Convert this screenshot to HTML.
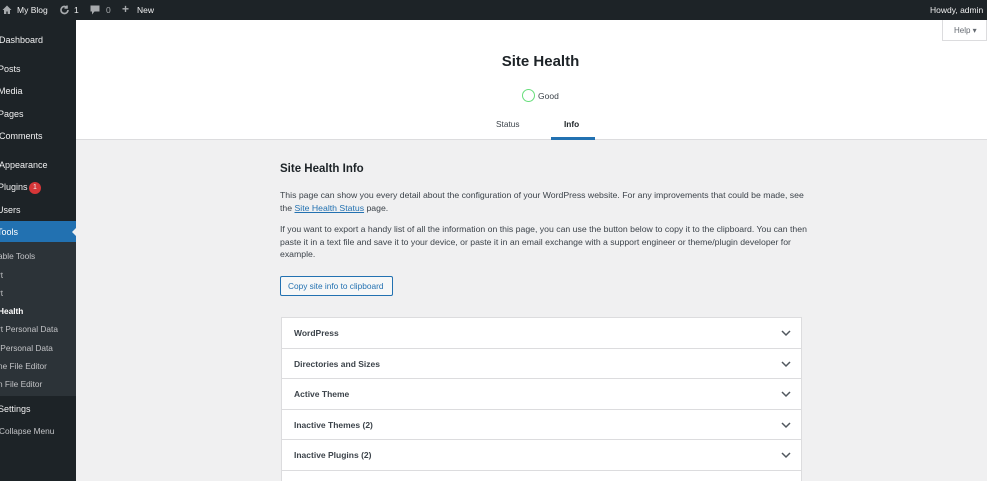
<!DOCTYPE html>
<html style="overflow:hidden;width:987px;height:481px"><head><style>
*{margin:0;padding:0;box-sizing:border-box}
body{width:987px;height:481px;overflow:hidden;background:#f0f0f1;font-family:"Liberation Sans",sans-serif;position:relative;color:#1d2327}
.bar{position:absolute;left:0;top:0;width:987px;height:20px;background:#1d2327;color:#f0f0f1;font-size:8.5px}
.bar span{position:absolute;top:5px}
.side{position:absolute;left:0;top:20px;width:76px;height:461px;background:#1d2327;color:#f0f0f1;font-size:9px;overflow:hidden}
.side div{position:absolute;white-space:nowrap}
.sub{position:absolute;left:0;top:222px;width:76px;height:154px;background:#2c3338}
.side .sub div{color:#c3c4c7;font-size:8.3px}
.hdr{position:absolute;left:76px;top:20px;width:911px;height:120px;background:#fff;border-bottom:1px solid #dcdcde}
.abs{position:absolute}
p{position:absolute;left:280px;font-size:8.7px;line-height:12.5px;color:#3c434a;width:525px}
.acc{position:absolute;left:281px;width:521px;height:170px;overflow:hidden;background:#fff;border:1px solid #dcdcde}
.row{height:30.5px;border-bottom:1px solid #dcdcde;position:relative;font-size:8.5px;font-weight:bold;color:#3c434a;padding:10px 0 0 12px}
.row svg{position:absolute;right:10px;top:12px}
</style></head><body>
<div class="bar">
<svg class="abs" style="left:2px;top:5px" width="10" height="10" viewBox="0 0 10 10"><path d="M5 0.5L0.5 5h1.5v4h2.3V6.5h1.4V9h2.3V5h1.5z" fill="#a7aaad"/></svg>
<span style="left:17px">My Blog</span>
<svg class="abs" style="left:59px;top:5px" width="11" height="10" viewBox="0 0 11 10"><path d="M9 5a3.5 3.5 0 1 1-1-2.5M8 0.5v2.5h-2.5M2 5a3.5 3.5 0 0 0 6 2.5" stroke="#a7aaad" stroke-width="1.6" fill="none"/></svg>
<span style="left:74px">1</span>
<svg class="abs" style="left:90px;top:5px" width="10" height="10" viewBox="0 0 10 10"><path d="M0.5 0.5h9v6h-5l-2.5 3v-3h-1.5z" fill="#a7aaad"/></svg>
<span style="left:106px;color:#a7aaad">0</span>
<span style="left:122px;font-size:12px;top:2px;font-weight:bold;color:#a7aaad">+</span>
<span style="left:137px">New</span>
<span style="left:930px">Howdy, admin</span>
</div>
<div class="side">
<div style="left:-1px;top:15px">Dashboard</div>
<div style="left:-2px;top:44px">Posts</div>
<div style="left:-2px;top:66px">Media</div>
<div style="left:-2px;top:89px">Pages</div>
<div style="left:-1px;top:111px">Comments</div>
<div style="left:-1px;top:140px">Appearance</div>
<div style="left:-2px;top:162px">Plugins</div>
<div style="left:29px;top:162px;width:12px;height:12px;border-radius:6px;background:#d63638;font-size:7px;text-align:center;line-height:12px">1</div>
<div style="left:-3px;top:185px">Users</div>
<div style="left:0;top:201px;width:76px;height:21px;background:#2271b1"></div>
<div style="left:-3px;top:207px;color:#fff">Tools</div>
<div style="left:72px;top:207px;width:0;height:0;border:5px solid transparent;border-right-color:#f0f0f1;border-left:none"></div>
<div class="sub">
<div style="left:-2px;top:9px">able Tools</div>
<div style="left:-2px;top:28px">rt</div>
<div style="left:-2px;top:46px">rt</div>
<div style="left:-2px;top:64px;color:#fff;font-weight:bold">Health</div>
<div style="left:-2px;top:82px">rt Personal Data</div>
<div style="left:-2px;top:101px">&nbsp;Personal Data</div>
<div style="left:-2px;top:119px">ne File Editor</div>
<div style="left:-2px;top:137px">n File Editor</div>
</div>
<div style="left:-2px;top:384px">Settings</div>
<div style="left:-1px;top:406px;color:#c3c4c7;font-size:8.3px">Collapse Menu</div>
</div>
<div class="hdr">
<div class="abs" style="left:0;width:929px;top:33px;text-align:center;font-size:15px;font-weight:bold">Site Health</div>
<div class="abs" style="left:446px;top:69px;width:13px;height:13px;border:1.5px solid #68de7c;border-radius:50%"></div>
<div class="abs" style="left:462px;top:71px;font-size:8.5px;color:#3c434a">Good</div>
<div class="abs" style="left:420px;top:99px;font-size:8.3px;color:#3c434a">Status</div>
<div class="abs" style="left:488px;top:99px;font-size:8.3px;font-weight:bold;color:#1d2327">Info</div>
<div class="abs" style="left:475px;top:117px;width:44px;height:3px;background:#2271b1"></div>
<div class="abs" style="left:866px;top:0;width:45px;height:21px;border:1px solid #dcdcde;border-top:none;font-size:8px;color:#646970;padding:6px 0 0 11px">Help ▾</div>
</div>
<div class="abs" style="left:280px;top:163px;font-size:11.5px;font-weight:bold">Site Health Info</div>
<p style="top:189px;width:525px">This page can show you every detail about the configuration of your WordPress website. For any improvements that could be made, see the <span style="color:#2271b1;text-decoration:underline">Site Health Status</span> page.</p>
<p style="top:223px;width:535px">If you want to export a handy list of all the information on this page, you can use the button below to copy it to the clipboard. You can then paste it in a text file and save it to your device, or paste it in an email exchange with a support engineer or theme/plugin developer for example.</p>
<div class="abs" style="left:280px;top:276px;width:113px;height:20px;border:1px solid #2271b1;border-radius:2px;background:#f6f7f7;color:#2271b1;font-size:8.3px;padding:4px 0 0 7px">Copy site info to clipboard</div>
<div class="acc" style="top:317px">
<div class="row">WordPress<svg width="10" height="7" viewBox="0 0 10 7"><path d="M1 1l4 4 4-4" stroke="#50575e" stroke-width="1.5" fill="none"/></svg></div>
<div class="row">Directories and Sizes<svg width="10" height="7" viewBox="0 0 10 7"><path d="M1 1l4 4 4-4" stroke="#50575e" stroke-width="1.5" fill="none"/></svg></div>
<div class="row">Active Theme<svg width="10" height="7" viewBox="0 0 10 7"><path d="M1 1l4 4 4-4" stroke="#50575e" stroke-width="1.5" fill="none"/></svg></div>
<div class="row">Inactive Themes (2)<svg width="10" height="7" viewBox="0 0 10 7"><path d="M1 1l4 4 4-4" stroke="#50575e" stroke-width="1.5" fill="none"/></svg></div>
<div class="row">Inactive Plugins (2)<svg width="10" height="7" viewBox="0 0 10 7"><path d="M1 1l4 4 4-4" stroke="#50575e" stroke-width="1.5" fill="none"/></svg></div>
<div class="row"></div>
</div>
</body></html>
